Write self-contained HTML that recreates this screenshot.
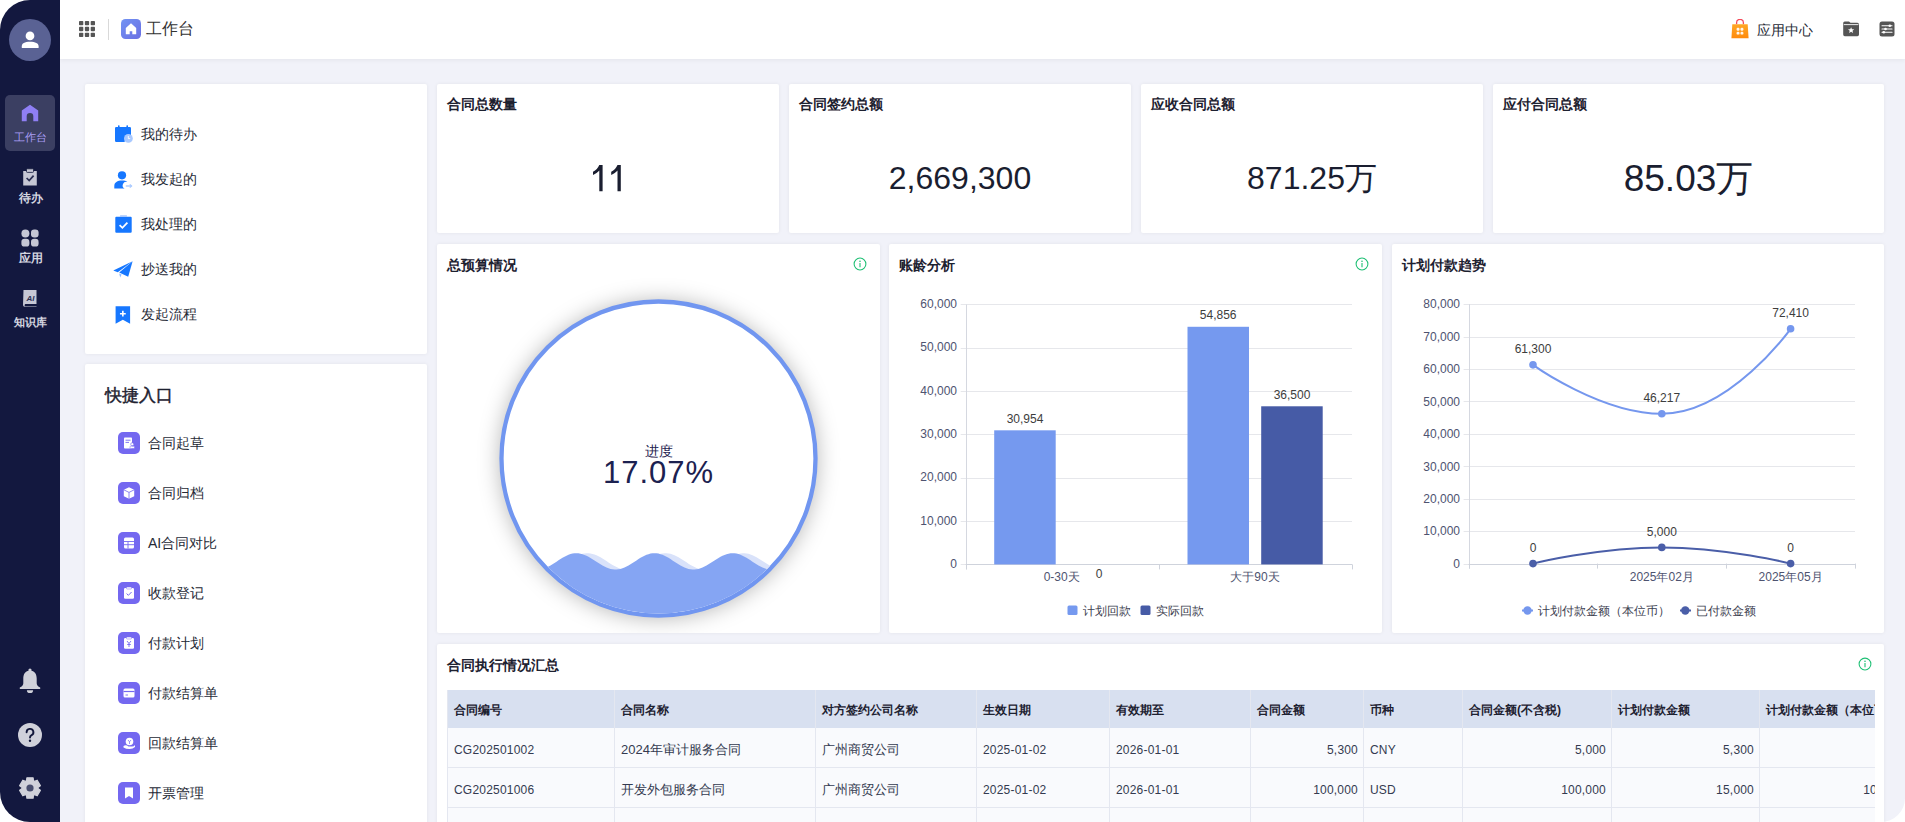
<!DOCTYPE html>
<html><head><meta charset="utf-8">
<style>
*{margin:0;padding:0;box-sizing:border-box}
html,body{width:1905px;height:822px;overflow:hidden;background:#fff;font-family:"Liberation Sans",sans-serif;color:#1d2130}
.abs{position:absolute}
#side{position:absolute;left:0;top:0;width:60px;height:822px;background:#13183f;border-radius:30px 0 0 30px}
#main{position:absolute;left:60px;top:0;width:1845px;height:822px;background:#f1f2f9;border-radius:0 0 24px 0}
#hdr{position:absolute;left:60px;top:0;width:1845px;height:59px;background:#fff;box-shadow:0 2px 4px rgba(0,0,0,0.045)}
.card{position:absolute;background:#fff;border-radius:2px;box-shadow:0 0 4px rgba(0,0,0,0.06)}
.t{position:absolute;white-space:nowrap;line-height:1}
.ttl{font-size:14px;font-weight:bold;color:#1d2130}
.big{font-size:32px;color:#1a1e30}
</style></head><body>
<div id="main"></div>
<div id="hdr"></div>
<div id="side"></div>


<!-- header content -->
<svg class="abs" style="left:79px;top:21px" width="16" height="16" viewBox="0 0 16 16">
<g fill="#555">
<rect x="0" y="0" width="4.3" height="4.3" rx="0.8"/><rect x="5.85" y="0" width="4.3" height="4.3" rx="0.8"/><rect x="11.7" y="0" width="4.3" height="4.3" rx="0.8"/>
<rect x="0" y="5.85" width="4.3" height="4.3" rx="0.8"/><rect x="5.85" y="5.85" width="4.3" height="4.3" rx="0.8"/><rect x="11.7" y="5.85" width="4.3" height="4.3" rx="0.8"/>
<rect x="0" y="11.7" width="4.3" height="4.3" rx="0.8"/><rect x="5.85" y="11.7" width="4.3" height="4.3" rx="0.8"/><rect x="11.7" y="11.7" width="4.3" height="4.3" rx="0.8"/>
</g></svg>
<div class="abs" style="left:108px;top:19px;width:1px;height:21px;background:#d9d9d9"></div>
<svg class="abs" style="left:121px;top:19px" width="20" height="20" viewBox="0 0 20 20">
<defs><linearGradient id="hg" x1="0" y1="0" x2="1" y2="1"><stop offset="0" stop-color="#7293f3"/><stop offset="1" stop-color="#6a6fe3"/></linearGradient></defs>
<rect width="20" height="20" rx="4.5" fill="url(#hg)"/>
<path d="M10 4.3 L15.2 9 V15.3 H11.3 V12.3 H8.7 V15.3 H4.8 V9 Z" fill="#fff"/>
</svg>
<div class="t" style="left:146px;top:20px;font-size:16px;color:#333;line-height:18px">工作台</div>

<!-- header right -->
<svg class="abs" style="left:1731px;top:19px" width="18" height="20" viewBox="0 0 18 20">
<defs><linearGradient id="bg1" x1="0" y1="0" x2="0" y2="1"><stop offset="0" stop-color="#ffa826"/><stop offset="1" stop-color="#ff8a0c"/></linearGradient></defs>
<path d="M5.6 5.2 V3.8 A3.4 3.4 0 0 1 12.4 3.8 V5.2" fill="none" stroke="#f4495a" stroke-width="1.3"/>
<path d="M1.3 5.2 H16.7 L17.6 19.2 H0.4 Z" fill="url(#bg1)"/>
<g fill="#fff" opacity="0.92"><rect x="5.6" y="8.8" width="2.9" height="2.9" rx="1.2"/><rect x="9.5" y="8.8" width="2.9" height="2.9" rx="1.2"/><rect x="5.6" y="12.7" width="2.9" height="2.9" rx="1.2"/><rect x="9.5" y="12.7" width="2.9" height="2.9" rx="1.2"/></g>
</svg>
<div class="t" style="left:1757px;top:22px;font-size:14px;color:#262a36;line-height:16px">应用中心</div>
<svg class="abs" style="left:1843px;top:21px" width="16" height="16" viewBox="0 0 16 16">
<path d="M0.2 2 A1.6 1.6 0 0 1 1.8 0.4 H6 L7.5 1.8 H14.4 A1.6 1.6 0 0 1 16 3.4 V13.6 A1.6 1.6 0 0 1 14.4 15.2 H1.8 A1.6 1.6 0 0 1 0.2 13.6 Z" fill="#555"/>
<rect x="0.8" y="3.2" width="14.6" height="0.9" fill="#fff"/>
<path d="M8.1 6.2 L9 8.2 L11.2 8.3 L9.5 9.7 L10.1 11.9 L8.1 10.7 L6.1 11.9 L6.7 9.7 L5 8.3 L7.2 8.2 Z" fill="#fff"/>
</svg>
<svg class="abs" style="left:1879px;top:21px" width="16" height="16" viewBox="0 0 16 16">
<rect x="0.5" y="0.5" width="15" height="15" rx="2.5" fill="#555"/>
<g stroke="#fff" stroke-width="1.1" stroke-linecap="round"><line x1="3" y1="4.8" x2="13" y2="4.8"/><line x1="3" y1="8" x2="13" y2="8"/><line x1="3" y1="11.2" x2="13" y2="11.2"/></g>
<g fill="#fff"><circle cx="10.8" cy="4.8" r="1.3"/><circle cx="6.5" cy="8" r="1.3"/><circle cx="4.8" cy="11.2" r="1.3"/></g>
</svg>

<!-- sidebar content -->
<div class="abs" style="left:9px;top:19px;width:42px;height:42px;border-radius:50%;background:#5a6294"></div>
<svg class="abs" style="left:20px;top:29px" width="20" height="20" viewBox="0 0 20 20">
<circle cx="10" cy="6.9" r="4.35" fill="#fff"/>
<path d="M1.8 19 V17.2 C1.8 14.6 4.6 12.8 10 12.8 C15.4 12.8 18.6 14.6 18.6 17.2 V19 Z" fill="#fff"/>
</svg>
<div class="abs" style="left:5px;top:95px;width:50px;height:56px;border-radius:5px;background:#3b3f62"></div>
<svg class="abs" style="left:21px;top:104px" width="18" height="18" viewBox="0 0 18 18">
<path d="M9 0.8 L17.2 6.6 V17.2 H12.3 V12.2 A3.3 3.3 0 0 0 5.7 12.2 V17.2 H0.8 V6.6 Z" fill="#8f7ff5"/>
</svg>
<div class="t" style="left:14px;top:131px;font-size:11px;color:#a99ef6;line-height:12px">工作台</div>

<svg class="abs" style="left:22px;top:168px" width="16" height="18" viewBox="0 0 16 18">
<path d="M1.2 3 H14.8 V17.5 H1.2 Z" fill="#c6c7d4" />
<rect x="4.5" y="0.8" width="7" height="3.6" rx="0.8" fill="#c6c7d4" stroke="#12173a" stroke-width="0.8"/>
<path d="M4.6 10 L7.2 12.6 L11.6 7.6" fill="none" stroke="#2b2f52" stroke-width="1.7"/>
</svg>
<div class="t" style="left:19px;top:191.5px;font-size:11.5px;font-weight:bold;color:#d5d6e0;line-height:13px">待办</div>

<svg class="abs" style="left:21px;top:229px" width="18" height="18" viewBox="0 0 18 18">
<g fill="#c6c7d4"><circle cx="4.4" cy="4.4" r="4"/><rect x="10" y="0.4" width="7.6" height="8" rx="3.2"/><rect x="0.4" y="9.8" width="8" height="7.8" rx="3.2"/><rect x="10" y="9.8" width="7.6" height="7.8" rx="3.2"/></g>
</svg>
<div class="t" style="left:19px;top:251.5px;font-size:11.5px;font-weight:bold;color:#d5d6e0;line-height:13px">应用</div>

<svg class="abs" style="left:22px;top:289px" width="16" height="18" viewBox="0 0 16 18">
<path d="M1.5 1 H14.5 V15 H3.3 A1.3 1.3 0 0 0 3.3 17.3 H14.5 V17.8 H2.8 A1.8 1.8 0 0 1 1 16 Z" fill="#c6c7d4"/>
<text x="8.5" y="12.2" text-anchor="middle" font-family="Liberation Sans" font-weight="bold" font-style="italic" font-size="8" fill="#2b2f52">AI</text>
</svg>
<div class="t" style="left:13.5px;top:315.5px;font-size:11px;font-weight:bold;color:#d5d6e0;line-height:13px">知识库</div>

<svg class="abs" style="left:19px;top:668px" width="22" height="26" viewBox="0 0 22 26">
<circle cx="11" cy="2" r="1.6" fill="#d0d1da"/>
<path d="M11 2.6 C6.3 2.6 4.3 6.4 4.3 10.6 V15.2 C4.3 17 3 18.4 0.8 19.6 V21 H21.2 V19.6 C19 18.4 17.7 17 17.7 15.2 V10.6 C17.7 6.4 15.7 2.6 11 2.6 Z" fill="#d0d1da"/>
<path d="M7.9 22.2 A3.1 2.9 0 0 0 14.1 22.2 Z" fill="#d0d1da"/>
</svg>
<svg class="abs" style="left:18px;top:723px" width="24" height="24" viewBox="0 0 24 24">
<circle cx="12" cy="12" r="12" fill="#d0d1da"/>
<path d="M8.6 9.3 A3.4 3.4 0 1 1 13.3 12.4 C12.3 12.9 12 13.4 12 14.6" fill="none" stroke="#12173a" stroke-width="1.9" stroke-linecap="round"/>
<circle cx="12" cy="17.8" r="1.2" fill="#12173a"/>
</svg>
<svg class="abs" style="left:19px;top:777px" width="22" height="22" viewBox="0 0 22 22">
<path d="M7.52 3.80 L7.87 0.87 L14.13 0.87 L14.48 3.80 L15.50 4.38 L18.20 3.22 L21.34 8.65 L18.98 10.41 L18.98 11.59 L21.34 13.35 L18.20 18.78 L15.50 17.62 L14.48 18.20 L14.13 21.13 L7.87 21.13 L7.52 18.20 L6.50 17.62 L3.80 18.78 L0.66 13.35 L3.02 11.59 L3.02 10.41 L0.66 8.65 L3.80 3.22 L6.50 4.38 Z" fill="#d0d1da" stroke="#d0d1da" stroke-width="1.2" stroke-linejoin="round"/>
<circle cx="11" cy="11" r="3.6" fill="#474c6e"/>
</svg>

<!-- left cards -->
<div class="card" style="left:85px;top:84px;width:342px;height:270px"></div>
<div class="card" style="left:85px;top:364px;width:342px;height:470px"></div>


<!-- left panel 1 -->
<svg class="abs" style="left:114px;top:125px" width="19" height="18" viewBox="0 0 19 18">
<path d="M1 3.2 A1.2 1.2 0 0 1 2.2 2 H15.8 A1.2 1.2 0 0 1 17 3.2 V11 A6 6 0 0 0 10.6 17 H2.2 A1.2 1.2 0 0 1 1 15.8 Z" fill="#1677ff"/>
<rect x="4" y="0.3" width="1.6" height="3.4" rx="0.6" fill="#1677ff"/><rect x="12.4" y="0.3" width="1.6" height="3.4" rx="0.6" fill="#1677ff"/>
<circle cx="14.4" cy="13.4" r="4.4" fill="#a9c9ff"/>
<path d="M14.3 11 V13.6 H16.2" fill="none" stroke="#fff" stroke-width="0.9"/>
</svg>
<div class="t" style="left:141px;top:126px;font-size:14px;color:#262a36;line-height:16px">我的待办</div>

<svg class="abs" style="left:114px;top:171px" width="19" height="18" viewBox="0 0 19 18">
<circle cx="8" cy="4.3" r="4.1" fill="#1677ff"/>
<path d="M0.3 17.6 V15.2 C0.3 11.4 3.4 9.6 8 9.6 C10.4 9.6 12.2 10.1 13.4 11 A3.6 3.6 0 0 0 10.6 17.6 Z" fill="#1677ff"/>
<path d="M11.8 15 H17.6" stroke="#a9c9ff" stroke-width="1.4"/>
<path d="M15.8 13.4 L17.6 15 L15.8 16.6" fill="none" stroke="#a9c9ff" stroke-width="1.2"/>
</svg>
<div class="t" style="left:141px;top:171px;font-size:14px;color:#262a36;line-height:16px">我发起的</div>

<svg class="abs" style="left:115px;top:215px" width="17" height="18" viewBox="0 0 17 18">
<path d="M0.3 2.8 A1 1 0 0 1 1.3 1.8 H15.7 A1 1 0 0 1 16.7 2.8 V16.8 A1 1 0 0 1 15.7 17.8 H1.3 A1 1 0 0 1 0.3 16.8 Z" fill="#1677ff"/>
<rect x="5" y="0.3" width="7" height="1.6" rx="0.5" fill="#a9c9ff"/>
<path d="M4.6 10.2 L7.4 12.8 L12.4 7.6" fill="none" stroke="#fff" stroke-width="1.8"/>
</svg>
<div class="t" style="left:141px;top:216px;font-size:14px;color:#262a36;line-height:16px">我处理的</div>

<svg class="abs" style="left:113px;top:261px" width="20" height="17" viewBox="0 0 20 17">
<path d="M19.6 0.3 L0.3 9.6 L4.8 11.2 Z" fill="#1677ff"/>
<path d="M19.6 0.3 L6.2 11.6 L15.2 15.8 Z" fill="#1677ff"/>
<path d="M6.2 12.4 L7.2 16.4 L8.6 13.6 Z" fill="#8db8ff"/>
</svg>
<div class="t" style="left:141px;top:261px;font-size:14px;color:#262a36;line-height:16px">抄送我的</div>

<svg class="abs" style="left:115px;top:306px" width="16" height="18" viewBox="0 0 16 18">
<path d="M0.6 0.3 H15.1 V17.8 L7.85 13.8 L0.6 17.8 Z" fill="#1677ff"/>
<path d="M7.85 4.8 V10.6 M4.95 7.7 H10.75" stroke="#fff" stroke-width="1.6"/>
</svg>
<div class="t" style="left:141px;top:306px;font-size:14px;color:#262a36;line-height:16px">发起流程</div>

<!-- quick entry -->
<div class="t" style="left:105px;top:386px;font-size:17px;font-weight:normal;-webkit-text-stroke:0.45px #1d2130;color:#1d2130;line-height:19px">快捷入口</div>
<svg class="abs" style="left:118px;top:432px" width="22" height="22" viewBox="0 0 22 22"><rect width="22" height="22" rx="5" fill="#7468f0"/><rect x="6" y="5.5" width="8" height="11" rx="0.8" fill="#fff"/><path d="M7.5 8.2 H12.5 M7.5 10.4 H11" stroke="#7468f0" stroke-width="0.9"/><circle cx="14.2" cy="12.2" r="1.5" fill="#fff" stroke="#7468f0" stroke-width="0.6"/><rect x="12" y="14.2" width="4.5" height="2.3" rx="0.4" fill="#fff" stroke="#7468f0" stroke-width="0.5"/></svg>
<div class="t" style="left:148px;top:435px;font-size:14px;color:#262a36;line-height:16px">合同起草</div>
<svg class="abs" style="left:118px;top:482px" width="22" height="22" viewBox="0 0 22 22"><rect width="22" height="22" rx="5" fill="#7468f0"/><path d="M11 5.2 L16.2 7.8 V14.2 L11 16.8 L5.8 14.2 V7.8 Z" fill="#fff"/><path d="M5.8 7.8 L11 10.4 L16.2 7.8 M11 10.4 V16.8" fill="none" stroke="#7468f0" stroke-width="0.8"/></svg>
<div class="t" style="left:148px;top:485px;font-size:14px;color:#262a36;line-height:16px">合同归档</div>
<svg class="abs" style="left:118px;top:532px" width="22" height="22" viewBox="0 0 22 22"><rect width="22" height="22" rx="5" fill="#7468f0"/><rect x="6" y="5.5" width="10" height="11" rx="1.5" fill="#fff"/><path d="M6 9.5 H16 M6 12.7 H16 M10 9.5 V16.5" stroke="#7468f0" stroke-width="0.9"/></svg>
<div class="t" style="left:148px;top:535px;font-size:14px;color:#262a36;line-height:16px">AI合同对比</div>
<svg class="abs" style="left:118px;top:582px" width="22" height="22" viewBox="0 0 22 22"><rect width="22" height="22" rx="5" fill="#7468f0"/><rect x="6" y="6" width="10" height="10.8" rx="1.2" fill="#fff"/><rect x="8.5" y="5" width="5" height="2" rx="0.6" fill="#fff" stroke="#7468f0" stroke-width="0.5"/><path d="M8.6 11.6 L10.4 13.3 L13.6 10" fill="none" stroke="#7468f0" stroke-width="1"/></svg>
<div class="t" style="left:148px;top:585px;font-size:14px;color:#262a36;line-height:16px">收款登记</div>
<svg class="abs" style="left:118px;top:632px" width="22" height="22" viewBox="0 0 22 22"><rect width="22" height="22" rx="5" fill="#7468f0"/><rect x="6" y="6" width="10" height="10.8" rx="1.2" fill="#fff"/><rect x="8.5" y="5" width="5" height="2" rx="0.6" fill="#fff" stroke="#7468f0" stroke-width="0.5"/><path d="M9 9 L11 11.5 L13 9 M11 11.5 V15 M9.2 12.5 H12.8" fill="none" stroke="#7468f0" stroke-width="0.9"/></svg>
<div class="t" style="left:148px;top:635px;font-size:14px;color:#262a36;line-height:16px">付款计划</div>
<svg class="abs" style="left:118px;top:682px" width="22" height="22" viewBox="0 0 22 22"><rect width="22" height="22" rx="5" fill="#7468f0"/><rect x="5.5" y="6.5" width="11" height="9" rx="1.5" fill="#fff"/><path d="M5.5 9.5 H16.5" stroke="#7468f0" stroke-width="1.2"/><path d="M7.5 13 H10" stroke="#7468f0" stroke-width="0.9"/></svg>
<div class="t" style="left:148px;top:685px;font-size:14px;color:#262a36;line-height:16px">付款结算单</div>
<svg class="abs" style="left:118px;top:732px" width="22" height="22" viewBox="0 0 22 22"><rect width="22" height="22" rx="5" fill="#7468f0"/><circle cx="11.5" cy="9.5" r="3.8" fill="#fff"/><path d="M10 8 L11.5 9.8 L13 8 M11.5 9.8 V12" stroke="#7468f0" stroke-width="0.7" fill="none"/><path d="M5.5 14 Q8 12.5 10.5 14.5 H14 Q16 14.5 17 13 V15 Q15 17 11.5 17 Q8 17 5.5 15.5 Z" fill="#fff"/></svg>
<div class="t" style="left:148px;top:735px;font-size:14px;color:#262a36;line-height:16px">回款结算单</div>
<svg class="abs" style="left:118px;top:782px" width="22" height="22" viewBox="0 0 22 22"><rect width="22" height="22" rx="5" fill="#7468f0"/><path d="M7 5.5 H15 V16.5 L11 14 L7 16.5 Z" fill="#fff"/></svg>
<div class="t" style="left:148px;top:785px;font-size:14px;color:#262a36;line-height:16px">开票管理</div>

<!-- stat cards -->
<div class="card" style="left:437px;top:84px;width:342px;height:149px"></div>
<div class="card" style="left:789px;top:84px;width:342px;height:149px"></div>
<div class="card" style="left:1141px;top:84px;width:342px;height:149px"></div>
<div class="card" style="left:1493px;top:84px;width:391px;height:149px"></div>

<!-- chart cards -->
<div class="card" style="left:437px;top:244px;width:443px;height:389px"></div>
<div class="card" style="left:889px;top:244px;width:493px;height:389px"></div>
<div class="card" style="left:1392px;top:244px;width:492px;height:389px"></div>

<!-- table card -->
<div class="card" style="left:437px;top:644px;width:1447px;height:200px"></div>


<!-- stat content -->
<div class="t ttl" style="left:447px;top:97px">合同总数量</div>
<div class="t ttl" style="left:799px;top:97px">合同签约总额</div>
<div class="t ttl" style="left:1151px;top:97px">应收合同总额</div>
<div class="t ttl" style="left:1503px;top:97px">应付合同总额</div>
<svg class="abs" style="left:592.5px;top:164.9px" width="29" height="27" viewBox="0 0 29 27"><path d="M6.3 0 H9.6 V26.2 H6.3 V5.6 C4.8 7.4 2.6 9 0 10.1 V6.7 C2.9 5.3 5.1 2.9 6.3 0 Z" fill="#1a1e30"/><path transform="translate(18.2 0)" d="M6.3 0 H9.6 V26.2 H6.3 V5.6 C4.8 7.4 2.6 9 0 10.1 V6.7 C2.9 5.3 5.1 2.9 6.3 0 Z" fill="#1a1e30"/></svg>
<div class="t big" style="left:789px;width:342px;text-align:center;top:162px">2,669,300</div>
<div class="t big" style="left:1141px;width:342px;text-align:center;top:162px">871.25万</div>
<div class="t big" style="left:1493px;width:391px;text-align:center;top:160px;font-size:37px">85.03万</div>

<div class="t ttl" style="left:447px;top:257.5px">总预算情况</div>
<div class="t ttl" style="left:899px;top:257.5px">账龄分析</div>
<div class="t ttl" style="left:1402px;top:257.5px">计划付款趋势</div>
<div class="t ttl" style="left:447px;top:657.5px">合同执行情况汇总</div>
<svg class="abs" style="left:853px;top:257px" width="14" height="14" viewBox="0 0 14 14"><circle cx="7" cy="7" r="5.9" fill="none" stroke="#1dbf73" stroke-width="1.05"/><circle cx="7" cy="4.3" r="0.8" fill="#1dbf73"/><path d="M7 6 V10.2" stroke="#1dbf73" stroke-width="1.1"/></svg>
<svg class="abs" style="left:1355px;top:257px" width="14" height="14" viewBox="0 0 14 14"><circle cx="7" cy="7" r="5.9" fill="none" stroke="#1dbf73" stroke-width="1.05"/><circle cx="7" cy="4.3" r="0.8" fill="#1dbf73"/><path d="M7 6 V10.2" stroke="#1dbf73" stroke-width="1.1"/></svg>
<svg class="abs" style="left:1858px;top:657px" width="14" height="14" viewBox="0 0 14 14"><circle cx="7" cy="7" r="5.9" fill="none" stroke="#1dbf73" stroke-width="1.05"/><circle cx="7" cy="4.3" r="0.8" fill="#1dbf73"/><path d="M7 6 V10.2" stroke="#1dbf73" stroke-width="1.1"/></svg>
<!-- CHARTS -->
<svg class="abs" style="left:437px;top:244px" width="443" height="389" viewBox="437 244 443 389">
<defs><filter id="sh" x="-30%" y="-30%" width="160%" height="160%"><feGaussianBlur stdDeviation="11"/></filter>
<clipPath id="cp"><circle cx="658.5" cy="458.5" r="155"/></clipPath></defs>
<circle cx="658.5" cy="459.5" r="158" fill="rgba(0,0,0,0.30)" filter="url(#sh)"/>
<circle cx="658.5" cy="458.5" r="157" fill="#fff" stroke="#7196f0" stroke-width="4.3"/>
<g clip-path="url(#cp)"><path d="M488.5 562.24 L490.5 560.92 L492.5 559.62 L494.5 558.36 L496.5 557.18 L498.5 556.11 L500.5 555.17 L502.5 554.40 L504.5 553.80 L506.5 553.41 L508.5 553.22 L510.5 553.24 L512.5 553.47 L514.5 553.91 L516.5 554.54 L518.5 555.35 L520.5 556.31 L522.5 557.41 L524.5 558.60 L526.5 559.88 L528.5 561.19 L530.5 562.50 L532.5 563.79 L534.5 565.02 L536.5 566.15 L538.5 567.16 L540.5 568.02 L542.5 568.71 L544.5 569.21 L546.5 569.51 L548.5 569.60 L550.5 569.48 L552.5 569.15 L554.5 568.62 L556.5 567.90 L558.5 567.01 L560.5 565.98 L562.5 564.84 L564.5 563.60 L566.5 562.31 L568.5 560.99 L570.5 559.68 L572.5 558.42 L574.5 557.23 L576.5 556.16 L578.5 555.21 L580.5 554.43 L582.5 553.83 L584.5 553.42 L586.5 553.22 L588.5 553.23 L590.5 553.45 L592.5 553.88 L594.5 554.50 L596.5 555.30 L598.5 556.26 L600.5 557.35 L602.5 558.54 L604.5 559.81 L606.5 561.12 L608.5 562.44 L610.5 563.73 L612.5 564.96 L614.5 566.09 L616.5 567.11 L618.5 567.98 L620.5 568.68 L622.5 569.19 L624.5 569.50 L626.5 569.60 L628.5 569.49 L630.5 569.17 L632.5 568.65 L634.5 567.94 L636.5 567.06 L638.5 566.04 L640.5 564.90 L642.5 563.66 L644.5 562.37 L646.5 561.05 L648.5 559.75 L650.5 558.48 L652.5 557.29 L654.5 556.21 L656.5 555.26 L658.5 554.47 L660.5 553.85 L662.5 553.44 L664.5 553.23 L666.5 553.23 L668.5 553.44 L670.5 553.85 L672.5 554.47 L674.5 555.26 L676.5 556.21 L678.5 557.29 L680.5 558.48 L682.5 559.75 L684.5 561.05 L686.5 562.37 L688.5 563.66 L690.5 564.90 L692.5 566.04 L694.5 567.06 L696.5 567.94 L698.5 568.65 L700.5 569.17 L702.5 569.49 L704.5 569.60 L706.5 569.50 L708.5 569.19 L710.5 568.68 L712.5 567.98 L714.5 567.11 L716.5 566.09 L718.5 564.96 L720.5 563.73 L722.5 562.44 L724.5 561.12 L726.5 559.81 L728.5 558.54 L730.5 557.35 L732.5 556.26 L734.5 555.30 L736.5 554.50 L738.5 553.88 L740.5 553.45 L742.5 553.23 L744.5 553.22 L746.5 553.42 L748.5 553.83 L750.5 554.43 L752.5 555.21 L754.5 556.16 L756.5 557.23 L758.5 558.42 L760.5 559.68 L762.5 560.99 L764.5 562.31 L766.5 563.60 L768.5 564.84 L770.5 565.98 L772.5 567.01 L774.5 567.90 L776.5 568.62 L778.5 569.15 L780.5 569.48 L782.5 569.60 L784.5 569.51 L786.5 569.21 L788.5 568.71 L790.5 568.02 L792.5 567.16 L794.5 566.15 L796.5 565.02 L798.5 563.79 L800.5 562.50 L802.5 561.19 L804.5 559.88 L806.5 558.60 L808.5 557.41 L810.5 556.31 L812.5 555.35 L814.5 554.54 L816.5 553.91 L818.5 553.47 L820.5 553.24 L822.5 553.22 L824.5 553.41 L826.5 553.80 L828.5 554.40 L828.5 628.5 L488.5 628.5 Z" fill="#d9e2fa"/><path d="M488.5 555.62 L490.5 554.76 L492.5 554.08 L494.5 553.58 L496.5 553.29 L498.5 553.20 L500.5 553.33 L502.5 553.66 L504.5 554.20 L506.5 554.92 L508.5 555.81 L510.5 556.84 L512.5 557.99 L514.5 559.23 L516.5 560.53 L518.5 561.85 L520.5 563.15 L522.5 564.41 L524.5 565.59 L526.5 566.67 L528.5 567.61 L530.5 568.39 L532.5 568.98 L534.5 569.39 L536.5 569.58 L538.5 569.56 L540.5 569.34 L542.5 568.91 L544.5 568.28 L546.5 567.48 L548.5 566.52 L550.5 565.42 L552.5 564.23 L554.5 562.96 L556.5 561.65 L558.5 560.33 L560.5 559.04 L562.5 557.81 L564.5 556.68 L566.5 555.67 L568.5 554.80 L570.5 554.11 L572.5 553.60 L574.5 553.30 L576.5 553.20 L578.5 553.32 L580.5 553.64 L582.5 554.17 L584.5 554.88 L586.5 555.76 L588.5 556.79 L590.5 557.93 L592.5 559.17 L594.5 560.46 L596.5 561.78 L598.5 563.09 L600.5 564.35 L602.5 565.54 L604.5 566.62 L606.5 567.56 L608.5 568.35 L610.5 568.96 L612.5 569.37 L614.5 569.58 L616.5 569.57 L618.5 569.35 L620.5 568.93 L622.5 568.32 L624.5 567.52 L626.5 566.57 L628.5 565.48 L630.5 564.29 L632.5 563.02 L634.5 561.71 L636.5 560.40 L638.5 559.11 L640.5 557.87 L642.5 556.73 L644.5 555.71 L646.5 554.84 L648.5 554.14 L650.5 553.62 L652.5 553.31 L654.5 553.20 L656.5 553.31 L658.5 553.62 L660.5 554.14 L662.5 554.84 L664.5 555.71 L666.5 556.73 L668.5 557.87 L670.5 559.11 L672.5 560.40 L674.5 561.71 L676.5 563.02 L678.5 564.29 L680.5 565.48 L682.5 566.57 L684.5 567.52 L686.5 568.32 L688.5 568.93 L690.5 569.35 L692.5 569.57 L694.5 569.58 L696.5 569.37 L698.5 568.96 L700.5 568.35 L702.5 567.56 L704.5 566.62 L706.5 565.54 L708.5 564.35 L710.5 563.09 L712.5 561.78 L714.5 560.46 L716.5 559.17 L718.5 557.93 L720.5 556.79 L722.5 555.76 L724.5 554.88 L726.5 554.17 L728.5 553.64 L730.5 553.32 L732.5 553.20 L734.5 553.30 L736.5 553.60 L738.5 554.11 L740.5 554.80 L742.5 555.67 L744.5 556.68 L746.5 557.81 L748.5 559.04 L750.5 560.33 L752.5 561.65 L754.5 562.96 L756.5 564.23 L758.5 565.42 L760.5 566.52 L762.5 567.48 L764.5 568.28 L766.5 568.91 L768.5 569.34 L770.5 569.56 L772.5 569.58 L774.5 569.39 L776.5 568.98 L778.5 568.39 L780.5 567.61 L782.5 566.67 L784.5 565.59 L786.5 564.41 L788.5 563.15 L790.5 561.85 L792.5 560.53 L794.5 559.23 L796.5 557.99 L798.5 556.84 L800.5 555.81 L802.5 554.92 L804.5 554.20 L806.5 553.66 L808.5 553.33 L810.5 553.20 L812.5 553.29 L814.5 553.58 L816.5 554.08 L818.5 554.76 L820.5 555.62 L822.5 556.63 L824.5 557.76 L826.5 558.98 L828.5 560.27 L828.5 628.5 L488.5 628.5 Z" fill="#85a5f3"/></g>
<text x="658.5" y="456" text-anchor="middle" font-family="Liberation Sans, sans-serif" font-size="14" fill="#1f2350">进度</text>
<text x="658.5" y="483" text-anchor="middle" font-family="Liberation Sans, sans-serif" font-size="31" letter-spacing="1" fill="#1c2150">17.07%</text>
</svg>
<svg class="abs" style="left:889px;top:244px" width="493" height="389" viewBox="889 244 493 389">
<line x1="960.7" y1="564.5" x2="1352" y2="564.5" stroke="#e6e7eb" stroke-width="1"/>
<text x="957" y="567.8" text-anchor="end" font-family="Liberation Sans, sans-serif" font-size="12" fill="#4e5370">0</text>
<line x1="960.7" y1="521.5" x2="1352" y2="521.5" stroke="#e6e7eb" stroke-width="1"/>
<text x="957" y="524.5" text-anchor="end" font-family="Liberation Sans, sans-serif" font-size="12" fill="#4e5370">10,000</text>
<line x1="960.7" y1="478.5" x2="1352" y2="478.5" stroke="#e6e7eb" stroke-width="1"/>
<text x="957" y="481.2" text-anchor="end" font-family="Liberation Sans, sans-serif" font-size="12" fill="#4e5370">20,000</text>
<line x1="960.7" y1="434.5" x2="1352" y2="434.5" stroke="#e6e7eb" stroke-width="1"/>
<text x="957" y="437.8" text-anchor="end" font-family="Liberation Sans, sans-serif" font-size="12" fill="#4e5370">30,000</text>
<line x1="960.7" y1="391.5" x2="1352" y2="391.5" stroke="#e6e7eb" stroke-width="1"/>
<text x="957" y="394.5" text-anchor="end" font-family="Liberation Sans, sans-serif" font-size="12" fill="#4e5370">40,000</text>
<line x1="960.7" y1="348.5" x2="1352" y2="348.5" stroke="#e6e7eb" stroke-width="1"/>
<text x="957" y="351.2" text-anchor="end" font-family="Liberation Sans, sans-serif" font-size="12" fill="#4e5370">50,000</text>
<line x1="960.7" y1="304.5" x2="1352" y2="304.5" stroke="#e6e7eb" stroke-width="1"/>
<text x="957" y="307.9" text-anchor="end" font-family="Liberation Sans, sans-serif" font-size="12" fill="#4e5370">60,000</text>
<line x1="966.5" y1="304.5" x2="966.5" y2="569.4" stroke="#d5d8e0"/>
<line x1="965.7" y1="564.5" x2="1352" y2="564.5" stroke="#cfd3dc"/>
<line x1="966.5" y1="564.4" x2="966.5" y2="569.4" stroke="#cfd3dc"/>
<line x1="1159.5" y1="564.4" x2="1159.5" y2="569.4" stroke="#cfd3dc"/>
<line x1="1352.5" y1="564.4" x2="1352.5" y2="569.4" stroke="#cfd3dc"/>
<rect x="994.2" y="430.32" width="61.5" height="134.08" fill="#7599ef"/>
<text x="1025.0" y="422.8" text-anchor="middle" font-family="Liberation Sans, sans-serif" font-size="12" fill="#3d3d3d">30,954</text>
<rect x="1187.5" y="326.78" width="61.5" height="237.62" fill="#7599ef"/>
<text x="1218.2" y="319.3" text-anchor="middle" font-family="Liberation Sans, sans-serif" font-size="12" fill="#3d3d3d">54,856</text>
<rect x="1261.2" y="406.29" width="61.5" height="158.11" fill="#465ba6"/>
<text x="1292.0" y="398.8" text-anchor="middle" font-family="Liberation Sans, sans-serif" font-size="12" fill="#3d3d3d">36,500</text>
<text x="1099" y="578" text-anchor="middle" font-family="Liberation Sans, sans-serif" font-size="12" fill="#3d3d3d">0</text>
<text x="1061.7" y="581" text-anchor="middle" font-family="Liberation Sans, sans-serif" font-size="12" fill="#4e5370">0-30天</text>
<text x="1255" y="581" text-anchor="middle" font-family="Liberation Sans, sans-serif" font-size="12" fill="#4e5370">大于90天</text>
<rect x="1067.5" y="605.5" width="10" height="9.5" rx="1.5" fill="#7599ef"/>
<text x="1082.5" y="614.5" font-family="Liberation Sans, sans-serif" font-size="12" fill="#3d4150">计划回款</text>
<rect x="1140.5" y="605.5" width="10" height="9.5" rx="1.5" fill="#465ba6"/>
<text x="1155.5" y="614.5" font-family="Liberation Sans, sans-serif" font-size="12" fill="#3d4150">实际回款</text>
</svg>
<svg class="abs" style="left:1392px;top:244px" width="492" height="389" viewBox="1392 244 492 389">
<line x1="1463.6" y1="564.5" x2="1855" y2="564.5" stroke="#e6e7eb" stroke-width="1"/>
<text x="1460" y="567.8" text-anchor="end" font-family="Liberation Sans, sans-serif" font-size="12" fill="#4e5370">0</text>
<line x1="1463.6" y1="531.5" x2="1855" y2="531.5" stroke="#e6e7eb" stroke-width="1"/>
<text x="1460" y="535.4" text-anchor="end" font-family="Liberation Sans, sans-serif" font-size="12" fill="#4e5370">10,000</text>
<line x1="1463.6" y1="499.5" x2="1855" y2="499.5" stroke="#e6e7eb" stroke-width="1"/>
<text x="1460" y="502.9" text-anchor="end" font-family="Liberation Sans, sans-serif" font-size="12" fill="#4e5370">20,000</text>
<line x1="1463.6" y1="466.5" x2="1855" y2="466.5" stroke="#e6e7eb" stroke-width="1"/>
<text x="1460" y="470.5" text-anchor="end" font-family="Liberation Sans, sans-serif" font-size="12" fill="#4e5370">30,000</text>
<line x1="1463.6" y1="434.5" x2="1855" y2="434.5" stroke="#e6e7eb" stroke-width="1"/>
<text x="1460" y="438.1" text-anchor="end" font-family="Liberation Sans, sans-serif" font-size="12" fill="#4e5370">40,000</text>
<line x1="1463.6" y1="401.5" x2="1855" y2="401.5" stroke="#e6e7eb" stroke-width="1"/>
<text x="1460" y="405.7" text-anchor="end" font-family="Liberation Sans, sans-serif" font-size="12" fill="#4e5370">50,000</text>
<line x1="1463.6" y1="369.5" x2="1855" y2="369.5" stroke="#e6e7eb" stroke-width="1"/>
<text x="1460" y="373.2" text-anchor="end" font-family="Liberation Sans, sans-serif" font-size="12" fill="#4e5370">60,000</text>
<line x1="1463.6" y1="337.5" x2="1855" y2="337.5" stroke="#e6e7eb" stroke-width="1"/>
<text x="1460" y="340.8" text-anchor="end" font-family="Liberation Sans, sans-serif" font-size="12" fill="#4e5370">70,000</text>
<line x1="1463.6" y1="304.5" x2="1855" y2="304.5" stroke="#e6e7eb" stroke-width="1"/>
<text x="1460" y="308.4" text-anchor="end" font-family="Liberation Sans, sans-serif" font-size="12" fill="#4e5370">80,000</text>
<line x1="1469.5" y1="304.2" x2="1469.5" y2="568.6" stroke="#d5d8e0"/>
<line x1="1468.6" y1="564.5" x2="1855" y2="564.5" stroke="#cfd3dc"/>
<line x1="1469.5" y1="563.6" x2="1469.5" y2="568.6" stroke="#cfd3dc"/>
<line x1="1597.5" y1="563.6" x2="1597.5" y2="568.6" stroke="#cfd3dc"/>
<line x1="1726.5" y1="563.6" x2="1726.5" y2="568.6" stroke="#cfd3dc"/>
<line x1="1855.5" y1="563.6" x2="1855.5" y2="568.6" stroke="#cfd3dc"/>
<path d="M1533.00 364.83 C1533.00 364.83 1601.04 413.74 1661.80 413.74 C1729.84 413.74 1790.60 328.81 1790.60 328.81" fill="none" stroke="#7597ee" stroke-width="2"/>
<path d="M1533.00 563.60 C1533.00 563.60 1597.40 547.39 1661.80 547.39 C1726.20 547.39 1790.60 563.60 1790.60 563.60" fill="none" stroke="#4a5ea8" stroke-width="2"/>
<circle cx="1533.00" cy="364.83" r="3.8" fill="#7597ee"/>
<circle cx="1661.80" cy="413.74" r="3.8" fill="#7597ee"/>
<circle cx="1790.60" cy="328.81" r="3.8" fill="#7597ee"/>
<circle cx="1533.00" cy="563.60" r="3.8" fill="#4a5ea8"/>
<circle cx="1661.80" cy="547.39" r="3.8" fill="#4a5ea8"/>
<circle cx="1790.60" cy="563.60" r="3.8" fill="#4a5ea8"/>
<text x="1533.0" y="353.3" text-anchor="middle" font-family="Liberation Sans, sans-serif" font-size="12" fill="#3d3d3d">61,300</text>
<text x="1661.8" y="402.2" text-anchor="middle" font-family="Liberation Sans, sans-serif" font-size="12" fill="#3d3d3d">46,217</text>
<text x="1790.6" y="317.3" text-anchor="middle" font-family="Liberation Sans, sans-serif" font-size="12" fill="#3d3d3d">72,410</text>
<text x="1533.0" y="552.1" text-anchor="middle" font-family="Liberation Sans, sans-serif" font-size="12" fill="#3d3d3d">0</text>
<text x="1661.8" y="535.9" text-anchor="middle" font-family="Liberation Sans, sans-serif" font-size="12" fill="#3d3d3d">5,000</text>
<text x="1790.6" y="552.1" text-anchor="middle" font-family="Liberation Sans, sans-serif" font-size="12" fill="#3d3d3d">0</text>
<text x="1661.8" y="581" text-anchor="middle" font-family="Liberation Sans, sans-serif" font-size="12" fill="#4e5370">2025年02月</text>
<text x="1790.6" y="581" text-anchor="middle" font-family="Liberation Sans, sans-serif" font-size="12" fill="#4e5370">2025年05月</text>
<line x1="1522" y1="610.5" x2="1533" y2="610.5" stroke="#7597ee" stroke-width="2"/><circle cx="1527.5" cy="610.5" r="4.2" fill="#7597ee"/>
<text x="1538" y="614.5" font-family="Liberation Sans, sans-serif" font-size="12" fill="#3d4150">计划付款金额（本位币）</text>
<line x1="1680" y1="610.5" x2="1691" y2="610.5" stroke="#4a5ea8" stroke-width="2"/><circle cx="1685.3" cy="610.5" r="4.2" fill="#4a5ea8"/>
<text x="1696" y="614.5" font-family="Liberation Sans, sans-serif" font-size="12" fill="#3d4150">已付款金额</text>
</svg>
<div class="abs" style="left:447px;top:690px;width:1428px;height:140px;overflow:hidden">
<div class="abs" style="left:0;top:0;width:1428px;height:38px;background:#d8e0f0"></div>
<div class="abs" style="left:0;top:38px;width:1428px;height:40px;background:#f9fafd;border-bottom:1px solid #e4e7f0"></div>
<div class="abs" style="left:0;top:78px;width:1428px;height:40px;background:#f9fafd;border-bottom:1px solid #e4e7f0"></div>
<div class="abs" style="left:0;top:118px;width:1428px;height:40px;background:#f9fafd;border-bottom:1px solid #e4e7f0"></div>
<div class="abs" style="left:167px;top:0;width:1px;height:140px;background:#e4e7f0"></div>
<div class="abs" style="left:368px;top:0;width:1px;height:140px;background:#e4e7f0"></div>
<div class="abs" style="left:529px;top:0;width:1px;height:140px;background:#e4e7f0"></div>
<div class="abs" style="left:662px;top:0;width:1px;height:140px;background:#e4e7f0"></div>
<div class="abs" style="left:803px;top:0;width:1px;height:140px;background:#e4e7f0"></div>
<div class="abs" style="left:916px;top:0;width:1px;height:140px;background:#e4e7f0"></div>
<div class="abs" style="left:1015px;top:0;width:1px;height:140px;background:#e4e7f0"></div>
<div class="abs" style="left:1164px;top:0;width:1px;height:140px;background:#e4e7f0"></div>
<div class="abs" style="left:1312px;top:0;width:1px;height:140px;background:#e4e7f0"></div>
<div class="abs" style="left:0;top:0;width:1px;height:140px;background:#e4e7f0"></div>
<div class="t" style="left:7px;top:13px;font-size:12px;font-weight:bold;color:#1d2130;line-height:14px">合同编号</div>
<div class="t" style="left:174px;top:13px;font-size:12px;font-weight:bold;color:#1d2130;line-height:14px">合同名称</div>
<div class="t" style="left:375px;top:13px;font-size:12px;font-weight:bold;color:#1d2130;line-height:14px">对方签约公司名称</div>
<div class="t" style="left:536px;top:13px;font-size:12px;font-weight:bold;color:#1d2130;line-height:14px">生效日期</div>
<div class="t" style="left:669px;top:13px;font-size:12px;font-weight:bold;color:#1d2130;line-height:14px">有效期至</div>
<div class="t" style="left:810px;top:13px;font-size:12px;font-weight:bold;color:#1d2130;line-height:14px">合同金额</div>
<div class="t" style="left:923px;top:13px;font-size:12px;font-weight:bold;color:#1d2130;line-height:14px">币种</div>
<div class="t" style="left:1022px;top:13px;font-size:12px;font-weight:bold;color:#1d2130;line-height:14px">合同金额(不含税)</div>
<div class="t" style="left:1171px;top:13px;font-size:12px;font-weight:bold;color:#1d2130;line-height:14px">计划付款金额</div>
<div class="t" style="left:1319px;top:13px;font-size:12px;font-weight:bold;color:#1d2130;line-height:14px">计划付款金额（本位币）</div>
<div class="t" style="left:7px;top:53px;font-size:12px;letter-spacing:0.2px;color:#343a50;line-height:14px">CG202501002</div>
<div class="t" style="left:174px;top:53px;font-size:13px;color:#343a50;line-height:14px">2024年审计服务合同</div>
<div class="t" style="left:375px;top:53px;font-size:13px;color:#343a50;line-height:14px">广州商贸公司</div>
<div class="t" style="left:536px;top:53px;font-size:12px;letter-spacing:0.2px;color:#343a50;line-height:14px">2025-01-02</div>
<div class="t" style="left:669px;top:53px;font-size:12px;letter-spacing:0.2px;color:#343a50;line-height:14px">2026-01-01</div>
<div class="t" style="left:803px;width:108px;text-align:right;top:53px;font-size:12px;letter-spacing:0.2px;color:#343a50;line-height:14px">5,300</div>
<div class="t" style="left:923px;top:53px;font-size:12px;letter-spacing:0.2px;color:#343a50;line-height:14px">CNY</div>
<div class="t" style="left:1015px;width:144px;text-align:right;top:53px;font-size:12px;letter-spacing:0.2px;color:#343a50;line-height:14px">5,000</div>
<div class="t" style="left:1164px;width:143px;text-align:right;top:53px;font-size:12px;letter-spacing:0.2px;color:#343a50;line-height:14px">5,300</div>
<div class="t" style="left:7px;top:93px;font-size:12px;letter-spacing:0.2px;color:#343a50;line-height:14px">CG202501006</div>
<div class="t" style="left:174px;top:93px;font-size:13px;color:#343a50;line-height:14px">开发外包服务合同</div>
<div class="t" style="left:375px;top:93px;font-size:13px;color:#343a50;line-height:14px">广州商贸公司</div>
<div class="t" style="left:536px;top:93px;font-size:12px;letter-spacing:0.2px;color:#343a50;line-height:14px">2025-01-02</div>
<div class="t" style="left:669px;top:93px;font-size:12px;letter-spacing:0.2px;color:#343a50;line-height:14px">2026-01-01</div>
<div class="t" style="left:803px;width:108px;text-align:right;top:93px;font-size:12px;letter-spacing:0.2px;color:#343a50;line-height:14px">100,000</div>
<div class="t" style="left:923px;top:93px;font-size:12px;letter-spacing:0.2px;color:#343a50;line-height:14px">USD</div>
<div class="t" style="left:1015px;width:144px;text-align:right;top:93px;font-size:12px;letter-spacing:0.2px;color:#343a50;line-height:14px">100,000</div>
<div class="t" style="left:1164px;width:143px;text-align:right;top:93px;font-size:12px;letter-spacing:0.2px;color:#343a50;line-height:14px">15,000</div>
<div class="t" style="left:1312px;width:149px;text-align:right;top:93px;font-size:12px;letter-spacing:0.2px;color:#343a50;line-height:14px">100,000</div>
</div>
<!-- /CHARTS -->
</body></html>
